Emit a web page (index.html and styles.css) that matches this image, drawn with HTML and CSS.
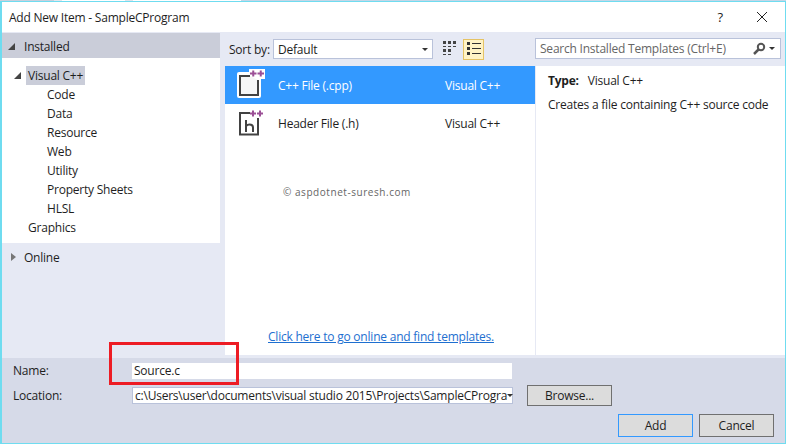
FILE: index.html
```html
<!DOCTYPE html>
<html lang="en">
<head>
<meta charset="utf-8">
<title>Add New Item</title>
<link rel="stylesheet" href="styles.css">
</head>
<body>
<div class="backdrop"><span class="bd-a"></span><span class="bd-b"></span><span class="bd-c"></span><span class="bd-d"></span><span class="bd-e"></span><span class="bd-f"></span></div>
<div class="dialog">
  <header class="titlebar">
    <span class="title">Add New Item - SampleCProgram</span>
    <span class="help">?</span>
    <svg class="close" width="12" height="12" viewBox="0 0 12 12"><path d="M1 1l10 10M11 1L1 11" stroke="#222" stroke-width="1" fill="none"/></svg>
  </header>
  <div class="main">
    <aside class="side">
      <div class="side-head"><span class="tri-open"></span>Installed</div>
      <div class="tree">
        <div class="tree-top"><span class="tri-open small"></span><span class="selected">Visual C++</span></div>
        <ul class="tree-list">
          <li>Code</li><li>Data</li><li>Resource</li><li>Web</li><li>Utility</li><li>Property Sheets</li><li>HLSL</li>
        </ul>
        <div class="tree-graphics">Graphics</div>
      </div>
      <div class="side-online"><span class="tri-closed"></span>Online</div>
    </aside>
    <section class="center">
      <div class="toolbar">
        <span class="sort-label">Sort by:</span>
        <div class="select"><span>Default</span><span class="caret"></span></div>
        <svg class="view" width="16" height="16" viewBox="0 0 16 16" fill="#444"><rect x="1" y="0" width="3" height="3"/><rect x="6" y="0" width="3" height="3"/><rect x="11" y="0" width="3" height="3"/><rect x="1" y="5" width="3" height="1"/><rect x="6" y="5" width="3" height="1"/><rect x="11" y="5" width="3" height="1"/><rect x="1" y="8" width="3" height="3"/><rect x="6" y="8" width="3" height="3"/><rect x="1" y="13" width="3" height="1"/><rect x="6" y="13" width="3" height="1"/></svg>
        <div class="view-on"><svg width="16" height="16" viewBox="0 0 16 16" fill="#333"><rect x="1" y="1" width="3" height="3"/><rect x="6" y="2" width="9" height="1"/><rect x="1" y="6" width="3" height="3"/><rect x="6" y="7" width="9" height="1"/><rect x="1" y="11" width="3" height="3"/><rect x="6" y="12" width="9" height="1"/></svg></div>
      </div>
      <div class="templates">
        <div class="item active">
          <svg class="file-icon" width="32" height="32" viewBox="0 0 32 32"><rect x="1" y="3" width="24" height="26" rx="2" fill="#fff"/><rect x="13" y="0" width="16" height="10" fill="#fff"/><path d="M14 7H4V26H22V11" fill="#f6f6f6" stroke="#424242" stroke-width="2"/><path d="M14 4.500h6.500M17.250 1.500v6M21.500 4.500h6.500M24.750 1.500v6" stroke="#9b4f96" stroke-width="2" fill="none"/></svg>
          <span class="item-name">C++ File (.cpp)</span><span class="item-type">Visual C++</span>
        </div>
        <div class="item">
          <svg class="file-icon" width="32" height="32" viewBox="0 0 32 32"><path d="M14 6H4V27.500H22V11" fill="none" stroke="#424242" stroke-width="2"/><path d="M10 13v12M10 19c1-1 2-1.500 3.500-1.500 2.500 0 3.500 1 3.500 3V25" fill="none" stroke="#424242" stroke-width="2"/><path d="M14 6.500h6M17 3.500v6M21 6.500h6M24 3.500v6" stroke="#9b4f96" stroke-width="2" fill="none"/></svg>
          <span class="item-name">Header File (.h)</span><span class="item-type">Visual C++</span>
        </div>
        <div class="watermark">© aspdotnet-suresh.com</div>
        <a class="online-link" href="#">Click here to go online and find templates.</a>
      </div>
    </section>
    <section class="details">
      <div class="search"><span class="search-text">Search Installed Templates (Ctrl+E)</span>
        <svg width="14" height="14" viewBox="0 0 14 14"><circle cx="9" cy="5" r="3.200" fill="none" stroke="#555" stroke-width="2"/><path d="M6.500 7.500L2 12" stroke="#555" stroke-width="2.500"/></svg><span class="caret"></span></div>
      <div class="info">
        <div class="type-row"><b>Type:</b><span>Visual C++</span></div>
        <p>Creates a file containing C++ source code</p>
      </div>
    </section>
  </div>
  <footer class="bottom">
    <div class="field-row">
      <label>Name:</label>
      <div class="name-input">Source.c</div>
    </div>
    <div class="field-row loc">
      <label>Location:</label>
      <div class="loc-input"><span>c:\Users\user\documents\visual studio 2015\Projects\SampleCProgra</span><span class="caret"></span></div>
      <button class="btn browse">Browse...</button>
    </div>
    <div class="actions">
      <button class="btn primary">Add</button>
      <button class="btn">Cancel</button>
    </div>
    <div class="annotation"></div>
  </footer>
</div>
</body>
</html>
```
FILE: styles.css
```css
* { box-sizing: border-box; }
html, body { margin: 0; height: 100%; background: #fff; }
body { font: 12px "Open Sans", "Noto Sans", sans-serif; letter-spacing: -.22px; color: #1e1e1e; overflow: hidden; }
.backdrop { height: 1px; width: 786px; display: flex; background: #c9d0dc; }
.backdrop span { height: 1px; display: block; }
.bd-a { width: 54px; }
.bd-b { width: 8px; background: #e3e6ec; }
.bd-c { width: 63px; background: #fff; }
.bd-d { width: 8px; background: #dfe3ea; }
.bd-e { width: 108px; background: #fff; }
.bd-f { flex: 1; background: #c4d6e6; }
.dialog { width: 786px; height: 443px; border: 1px solid #6fdcf0; border-left-width: 2px; background: #fff; display: flex; flex-direction: column; }
.titlebar { height: 30px; flex: none; display: flex; align-items: center; padding-left: 7px; background: #fff; }
.title { flex: 1; }
.help { font-size: 13px; margin-right: 33px; }
.close { margin-right: 17px; }
.main { flex: 1; display: flex; background: #e6e9f4; min-height: 0; }
.side { width: 223px; flex: none; padding-top: 1px; }
.side-head { height: 25px; width: 218px; padding-top: 1px; background: #cacdd9; display: flex; align-items: center; }
.tri-open { width: 0; height: 0; border-style: solid; border-width: 0 0 7px 7px; border-color: transparent transparent #444 transparent; margin: 0 9px 0 6px; }
.tri-open.small { margin: 0 5px 0 12px; }
.tree { height: 185px; background: #fff; width: 218px; padding-top: 8px; }
.tree-top { display: flex; align-items: center; height: 19px; }
.selected { background: #cacdd9; padding: 0 2px; height: 19px; line-height: 19px; }
.tree-list { list-style: none; margin: 0; padding: 0 0 0 45px; }
.tree-list li { height: 19px; line-height: 19px; }
.tree-graphics { height: 19px; line-height: 19px; padding-left: 26px; }
.side-online { display: flex; align-items: center; height: 28px; }
.tri-closed { width: 0; height: 0; border-style: solid; border-width: 4px 0 4px 5px; border-color: transparent transparent transparent #777; margin: 0 8px 0 9px; }
.center { width: 310px; flex: none; display: flex; flex-direction: column; }
.toolbar { height: 34px; flex: none; display: flex; align-items: center; padding-left: 4px; }
.sort-label { width: 44px; }
.select { width: 160px; height: 20px; background: #fff; border: 1px solid #b9c2da; display: flex; align-items: center; justify-content: space-between; padding: 0 4px; }
.caret { width: 0; height: 0; border-style: solid; border-width: 3px 3px 0 3px; border-color: #333 transparent transparent transparent; flex: none; }
.view { margin-left: 9px; }
.view-on { width: 21px; height: 21px; margin-left: 5px; background: #fff3c6; border: 1px solid #e5c365; display: flex; align-items: center; justify-content: center; }
.templates { flex: 1; background: #fff; position: relative; margin-bottom: 3px; }
.item { height: 38px; display: flex; align-items: center; padding-left: 11px; }
.item.active { background: #3399ff; color: #fff; }
.file-icon { flex: none; margin-right: 10px; }
.item-name { width: 167px; }
.item-type { flex: none; }
.watermark { position: absolute; left: 58px; top: 119px; font-size: 10px; letter-spacing: .55px; color: #666; }
.online-link { position: absolute; left: 43px; top: 262px; color: #1e6fd0; text-decoration: underline; }
.details { flex: 1; display: flex; flex-direction: column; }
.search { height: 21px; margin: 6px 4px 7px 0; background: #fff; border: 1px solid #b9c2da; display: flex; align-items: center; padding: 0 5px 0 4px; color: #666; gap: 3px; }
.search-text { flex: 1; }
.info { flex: 1; background: #fff; margin-bottom: 3px; border-left: 1px solid #e6e9f4; padding: 6px 12px; white-space: nowrap; }
.type-row { display: flex; gap: 9px; }
.info p { margin: 7px 0 0; }
.bottom { height: 85px; flex: none; background: #d6dae8; position: relative; padding: 0 0 0 11px; }
.field-row { display: flex; align-items: center; height: 25px; }
.field-row label { width: 119px; flex: none; }
.name-input { width: 380px; height: 16px; background: #fff; line-height: 16px; padding-left: 2px; }
.loc-input { width: 381px; height: 17px; background: #fff; border: 1px solid #b9c2da; display: flex; align-items: center; justify-content: space-between; padding: 0 3px 0 2px; white-space: nowrap; }
.btn { height: 21px; width: 85px; background: #dcdcdc; border: 1px solid #707070; font: inherit; letter-spacing: inherit; color: #1e1e1e; padding: 0; }
.browse { margin-left: 14px; }
.actions { display: flex; justify-content: flex-end; gap: 6px; padding-right: 11px; margin-top: 6px; }
.actions .btn { width: 75px; height: 23px; }
.primary { border-color: #3399ff; }
.annotation { position: absolute; left: 107px; top: -16px; width: 130px; height: 43px; border: 3px solid #ed1c24; }
```
